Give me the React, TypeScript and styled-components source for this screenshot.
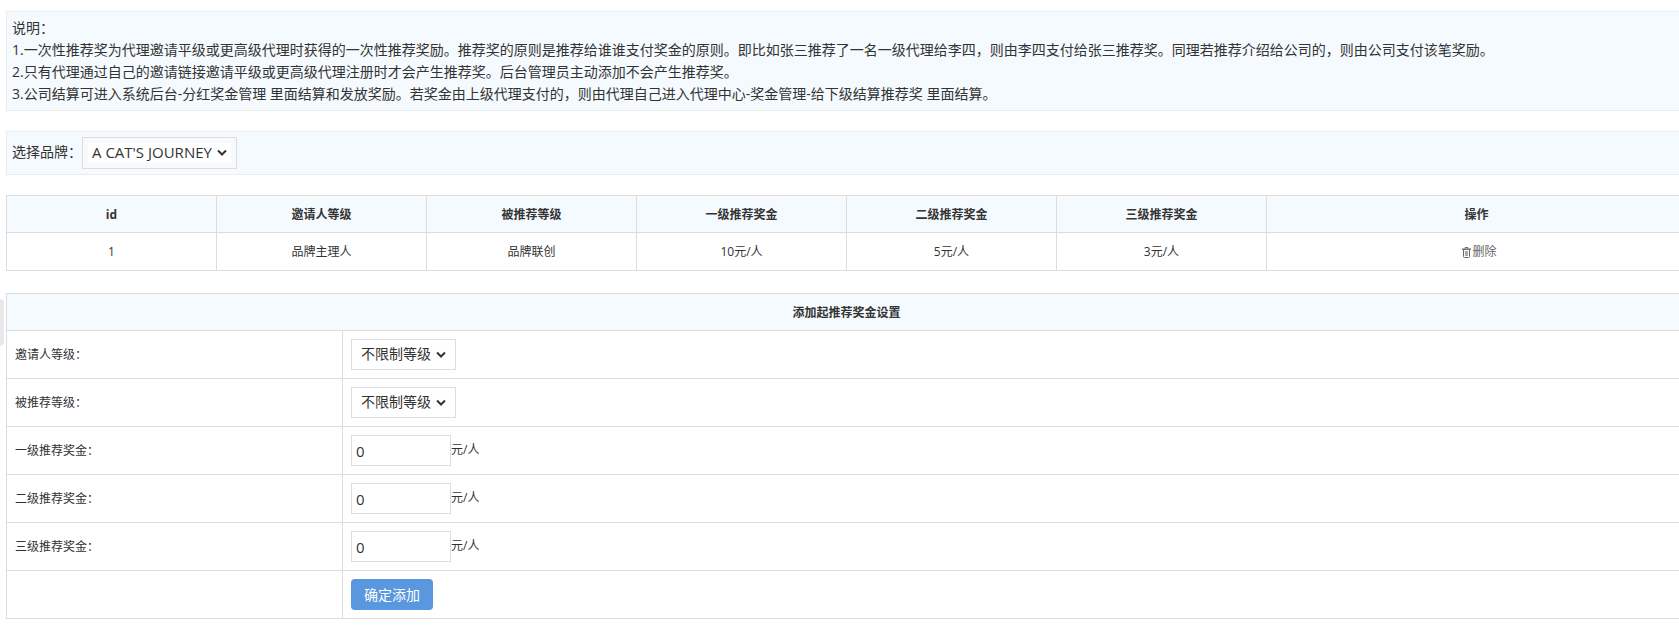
import React, { useState } from "react";
import styled, { createGlobalStyle } from "styled-components";

const line = "#dddddd";
const tint = "#f4fafe";

const GlobalStyle = createGlobalStyle`
  * { box-sizing: border-box; }
  body {
    margin: 0;
    background: #fff;
    color: #333;
    font: 14px/22px "Open Sans", "Noto Sans CJK SC", sans-serif;
    overflow-x: hidden;
  }
  button, input, select { font-family: inherit; color: inherit; }
`;

const Page = styled.main`
  display: flex;
  flex-direction: column;
  gap: 20px;
  padding: 11px 0 12px 6px;
  margin-right: -8px;
`;

const Panel = styled.section`
  padding: 5px;
  border: 1px solid #ebeded;
  background: ${tint};
`;

const Note = styled.p`
  margin: 0;
`;

const BrandBar = styled(Panel)`
  display: flex;
  align-items: center;
`;

const BrandLabel = styled.label`
  padding-bottom: 2px;
`;

const SelectBox = styled.span<{ $large?: boolean }>`
  display: inline-grid;
  align-items: center;
  height: ${(p) => (p.$large ? 32 : 31)}px;
  padding: 5px;
  border: 1px solid ${line};
  font-size: ${(p) => (p.$large ? 15 : 14)}px;
  vertical-align: top;

  > * { grid-area: 1 / 1; }
  svg {
    justify-self: end;
    margin-right: 4px;
    pointer-events: none;
  }
`;

const NativeSelect = styled.select`
  appearance: none;
  height: 100%;
  margin: 0;
  padding: 0 19px 2px 4px;
  border: 0;
  border-radius: 0;
  background: #fff;
  font-size: inherit;
  line-height: 18px;
`;

const Amount = styled.input`
  width: 100px;
  height: 31px;
  margin: 0;
  padding: 0 4px;
  border: 1px solid ${line};
  border-radius: 0;
  background: #fff;
  font-size: 15px;
`;

const Submit = styled.button`
  display: block;
  height: 31px;
  padding: 0 13px 2px;
  border: 0;
  border-radius: 4px;
  background: #5998de;
  color: #fff;
  font-size: 14px;
  cursor: pointer;
`;

const Table = styled.table`
  width: 100%;
  border-collapse: collapse;
  table-layout: fixed;
  font-size: 12px;
  line-height: 20px;
  margin-bottom: 2px;
`;

const Head = styled.th`
  height: 37px;
  padding: 2px 8px 0;
  border: 1px solid ${line};
  background: ${tint};
  font-weight: 700;
`;

const Cell = styled.td`
  height: 38px;
  padding: 0 8px;
  border: 1px solid ${line};
  text-align: center;
`;

const FieldCell = styled.td`
  height: 48px;
  padding: 8px;
  border: 1px solid ${line};
`;

const Field = styled.div`
  display: flex;
  align-items: center;
`;

const Unit = styled.span`
  padding-bottom: 2px;
`;

const DeleteLink = styled.a`
  padding-left: 6px;
  color: #666;
  text-decoration: none;

  svg {
    margin-right: 1px;
    vertical-align: -2px;
  }
`;

const DrawerHandle = styled.div`
  position: fixed;
  left: 0;
  top: 299px;
  width: 4px;
  height: 47px;
  border-radius: 0 4px 4px 0;
  background: #e9e9e9;
`;

const Chevron = () => (
  <svg width="10" height="8" viewBox="0 0 10 8" fill="none" stroke="#333" strokeWidth="2" aria-hidden="true">
    <path d="M1 1.5l4 4 4-4" />
  </svg>
);

const TrashIcon = () => (
  <svg width="9" height="11" viewBox="0 0 9 11" fill="none" stroke="currentColor" aria-hidden="true">
    <path d="M0 2.2h9" strokeWidth="1.4" />
    <path d="M3 1.6V0.6h3v1" />
    <path d="M1.5 3v6.5q0 1 1 1h4q1 0 1-1V3" />
    <path d="M3.4 4v5M4.5 4v5M5.6 4v5" strokeWidth="0.6" />
  </svg>
);

type SelectProps = { id: string; options: string[]; large?: boolean };

const Select = ({ id, options, large }: SelectProps) => (
  <SelectBox $large={large}>
    <NativeSelect id={id}>
      {options.map((option) => (
        <option key={option}>{option}</option>
      ))}
    </NativeSelect>
    <Chevron />
  </SelectBox>
);

const notes = [
  "说明：",
  "1.一次性推荐奖为代理邀请平级或更高级代理时获得的一次性推荐奖励。推荐奖的原则是推荐给谁谁支付奖金的原则。即比如张三推荐了一名一级代理给李四，则由李四支付给张三推荐奖。同理若推荐介绍给公司的，则由公司支付该笔奖励。",
  "2.只有代理通过自己的邀请链接邀请平级或更高级代理注册时才会产生推荐奖。后台管理员主动添加不会产生推荐奖。",
  "3.公司结算可进入系统后台-分红奖金管理 里面结算和发放奖励。若奖金由上级代理支付的，则由代理自己进入代理中心-奖金管理-给下级结算推荐奖 里面结算。",
];

const columns = ["id", "邀请人等级", "被推荐等级", "一级推荐奖金", "二级推荐奖金", "三级推荐奖金"];
const rows = [["1", "品牌主理人", "品牌联创", "10元/人", "5元/人", "3元/人"]];

const levelFields = [
  { id: "inviter", label: "邀请人等级：" },
  { id: "invitee", label: "被推荐等级：" },
];
const bonusFields = [
  { id: "bonus1", label: "一级推荐奖金：" },
  { id: "bonus2", label: "二级推荐奖金：" },
  { id: "bonus3", label: "三级推荐奖金：" },
];

export default function App() {
  const [bonus, setBonus] = useState<Record<string, string>>({ bonus1: "0", bonus2: "0", bonus3: "0" });

  return (
    <>
      <GlobalStyle />
      <Page lang="zh-CN">
        <Panel>
          {notes.map((text) => (
            <Note key={text}>{text}</Note>
          ))}
        </Panel>

        <BrandBar>
          <BrandLabel htmlFor="brand">选择品牌：</BrandLabel>
          <Select id="brand" options={["A CAT'S JOURNEY"]} large />
        </BrandBar>

        <Table>
          <colgroup>
            {columns.map((name) => (
              <col key={name} width="12.5%" />
            ))}
            <col width="25%" />
          </colgroup>
          <thead>
            <tr>
              {columns.map((name) => (
                <Head key={name} scope="col">{name}</Head>
              ))}
              <Head scope="col">操作</Head>
            </tr>
          </thead>
          <tbody>
            {rows.map((row) => (
              <tr key={row[0]}>
                {row.map((value, i) => (
                  <Cell key={columns[i]}>{value}</Cell>
                ))}
                <Cell>
                  <DeleteLink href="#delete">
                    <TrashIcon />
                    删除
                  </DeleteLink>
                </Cell>
              </tr>
            ))}
          </tbody>
        </Table>

        <form onSubmit={(e) => e.preventDefault()}>
          <Table>
            <colgroup>
              <col width="20%" />
              <col width="80%" />
            </colgroup>
            <thead>
              <tr>
                <Head colSpan={2}>添加起推荐奖金设置</Head>
              </tr>
            </thead>
            <tbody>
              {levelFields.map(({ id, label }) => (
                <tr key={id}>
                  <FieldCell>
                    <label htmlFor={id}>{label}</label>
                  </FieldCell>
                  <FieldCell>
                    <Field>
                      <Select id={id} options={["不限制等级"]} />
                    </Field>
                  </FieldCell>
                </tr>
              ))}
              {bonusFields.map(({ id, label }) => (
                <tr key={id}>
                  <FieldCell>
                    <label htmlFor={id}>{label}</label>
                  </FieldCell>
                  <FieldCell>
                    <Field>
                      <Amount
                        id={id}
                        type="text"
                        value={bonus[id]}
                        onChange={(e) => setBonus({ ...bonus, [id]: e.target.value })}
                      />
                      <Unit>元/人</Unit>
                    </Field>
                  </FieldCell>
                </tr>
              ))}
              <tr>
                <FieldCell />
                <FieldCell>
                  <Submit type="submit">确定添加</Submit>
                </FieldCell>
              </tr>
            </tbody>
          </Table>
        </form>
      </Page>
      <DrawerHandle />
    </>
  );
}
